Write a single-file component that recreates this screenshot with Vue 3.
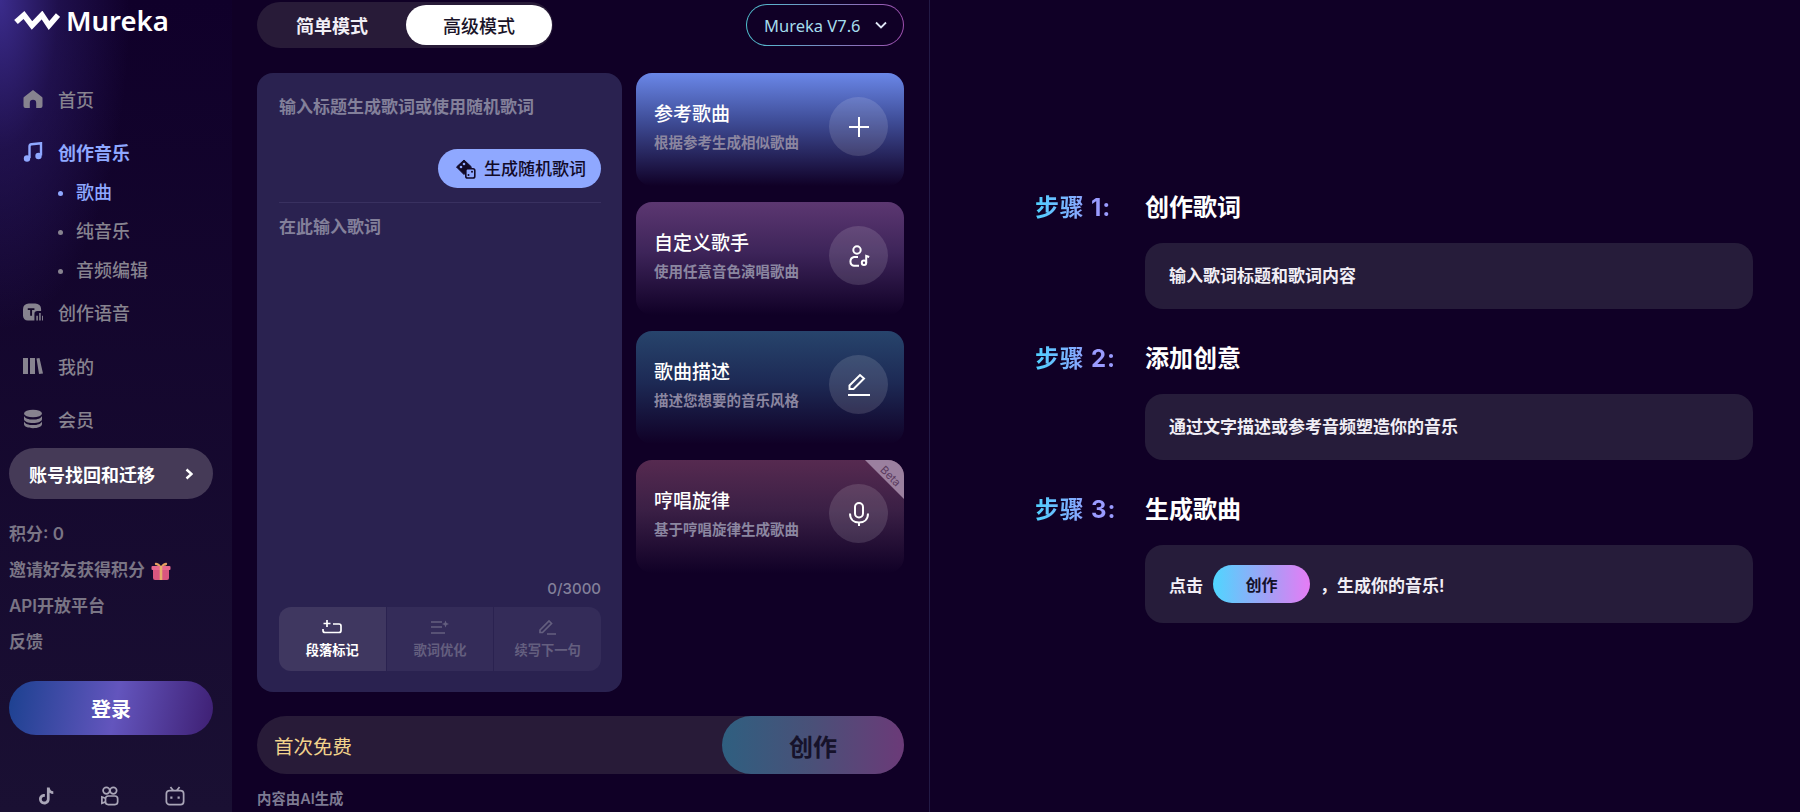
<script setup>
const tabs = [
  { label: '段落标记', active: true, icon: 'mark' },
  { label: '歌词优化', active: false, icon: 'polish' },
  { label: '续写下一句', active: false, icon: 'pen' },
]
const cards = [
  { cls: 'c1', title: '参考歌曲', sub: '根据参考生成相似歌曲', icon: 'plus' },
  { cls: 'c2', title: '自定义歌手', sub: '使用任意音色演唱歌曲', icon: 'singer' },
  { cls: 'c3', title: '歌曲描述', sub: '描述您想要的音乐风格', icon: 'edit' },
  { cls: 'c4', title: '哼唱旋律', sub: '基于哼唱旋律生成歌曲', icon: 'mic', beta: true },
]
</script>

<template>
  <div class="page">
    <aside class="side">
      <div class="logo">
        <svg width="46" height="20" viewBox="0 0 46 20"><path d="M2 11 L10 4 L18 14.500 L28 4 L35 14.500 L44 4" fill="none" stroke="#fff" stroke-width="5.500"/></svg>
        <span>Mureka</span>
      </div>
      <nav class="nav">
        <a class="item first">
          <svg viewBox="0 0 20 20"><path d="M10 1 L19 8 a1.500 1.500 0 0 1 .5 1.200V17a2 2 0 0 1-2 2h-4.300v-5a3.200 3.200 0 0 0-6.400 0V19H2.500a2 2 0 0 1-2-2V9.200A1.500 1.500 0 0 1 1 8Z" fill="currentColor"/></svg>
          首页
        </a>
        <a class="item active music">
          <svg viewBox="0 0 20 20"><path d="M6.500 16V4.500Q6.500 2.500 8.500 2.300L18 1.200v12.300" fill="none" stroke="currentColor" stroke-width="2.400"/><circle cx="4" cy="16.500" r="3.200" fill="currentColor"/><circle cx="15.500" cy="14" r="3.200" fill="currentColor"/></svg>
          创作音乐
        </a>
        <a class="sub on">歌曲</a>
        <a class="sub">纯音乐</a>
        <a class="sub">音频编辑</a>
        <a class="item voice">
          <svg viewBox="0 0 21 20"><path d="M6 1h7a6 6 0 0 1 6 6v2h-4a3 3 0 0 0-3 3v7H5a5 5 0 0 1-5-5V7a6 6 0 0 1 6-6Z" fill="currentColor"/><path d="M5 6h7v2H9.500v6h-2V8H5Z" fill="#140828"/><path d="M14 14h1.600v5H14ZM17 11h1.600v8H17ZM20 14h1v5h-1Z" fill="currentColor"/></svg>
          创作语音
        </a>
        <a class="item mine">
          <svg viewBox="0 0 20 20"><path d="M0 2h5v16H0ZM7 2h5v16H7ZM13.500 2.500l3-.5 3.500 15.500-4 .5Z" fill="currentColor"/></svg>
          我的
        </a>
        <a class="item vip">
          <svg viewBox="0 0 20 20"><ellipse cx="10" cy="4.500" rx="9" ry="3.800" fill="currentColor"/><path d="M1 7c1 2.500 4.500 3.600 9 3.600S18 9.500 19 7v3c0 2.500-4 4-9 4s-9-1.500-9-4Z" fill="currentColor"/><path d="M1 12.500c1 2.500 4.500 3.600 9 3.600s8-1.100 9-3.600V15c0 2.500-4 4.200-9 4.200S1 17.500 1 15Z" fill="currentColor"/></svg>
          会员
        </a>
      </nav>
      <div class="migrate"><span>账号找回和迁移</span><svg width="8" height="12" viewBox="0 0 8 12"><path d="M1.500 1.500 L6.500 6 L1.500 10.500" fill="none" stroke="#fff" stroke-width="2.500"/></svg></div>
      <div class="links">
        <div>积分: 0</div>
        <div class="gift">邀请好友获得积分
          <svg width="20" height="20" viewBox="0 0 20 20"><path d="M2 8h16v9a2 2 0 0 1-2 2H4a2 2 0 0 1-2-2Z" fill="#d9577f"/><rect x="0.500" y="5" width="19" height="4" rx="1" fill="#e8688e"/><rect x="8.700" y="5" width="2.600" height="14" fill="#e5b06a"/><path d="M10 5C7 1 3 1 4 3.500 4.600 5 8 5 10 5ZM10 5c3-4 7-4 6-1.500C15.400 5 12 5 10 5Z" fill="#e5a060"/></svg>
        </div>
        <div>API开放平台</div>
        <div>反馈</div>
      </div>
      <div class="login">登录</div>
      <div class="social">
        <svg width="17" height="20" viewBox="0 0 20 22"><path d="M10.500 1h3.200c.3 2.600 1.800 4.200 4.300 4.500v3.200c-1.600 0-3-.5-4.300-1.400v7.200c0 3.700-2.700 6.500-6.300 6.500S1.200 17.700 1.200 14.600c0-3.700 3.200-6.500 6.900-5.900v3.400c-2-.5-3.700.9-3.700 2.600 0 1.600 1.300 2.900 3 2.900 1.800 0 3.100-1.300 3.100-3.400Z" fill="#aaa6b8"/></svg>
        <svg width="18" height="20" viewBox="0 0 20 22" fill="none" stroke="#aaa6b8" stroke-width="1.900"><circle cx="6" cy="5" r="3.700"/><circle cx="13.700" cy="5" r="3.700"/><rect x="5" y="11" width="13.500" height="9.500" rx="3"/><path d="M5 13.500 1 12v7l4-1.500"/></svg>
        <svg width="20" height="20" viewBox="0 0 22 22" fill="none" stroke="#aaa6b8" stroke-width="1.900"><rect x="1.500" y="5" width="19" height="15.500" rx="3.500"/><path d="M6 1l3 4M16 1l-3 4"/><path d="M7 11.500v2.500M15 11.500v2.500" stroke-width="2.400"/></svg>
      </div>
    </aside>

    <main class="mid">
      <div class="top">
        <div class="seg">
          <span class="seg-btn easy">简单模式</span>
          <span class="seg-btn on">高级模式</span>
        </div>
        <div class="model">
          <span>Mureka V7.6</span>
          <svg width="14" height="9" viewBox="0 0 14 9"><path d="M2 1.500 L7 6.500 L12 1.500" fill="none" stroke="#dfe6f5" stroke-width="1.800"/></svg>
        </div>
      </div>
      <div class="work">
        <section class="lyric">
          <div class="ph title-ph">输入标题生成歌词或使用随机歌词</div>
          <div class="rand-row">
            <div class="rand">
              <svg width="20" height="20" viewBox="0 0 20 20"><path d="M8 1 L15.500 8 L8 15.500 L.5 8Z" fill="#120a28" stroke="#120a28" stroke-linejoin="round"/><circle cx="8" cy="5" r="1.300" fill="#8fa8ff"/><circle cx="5" cy="8" r="1.300" fill="#8fa8ff"/><rect x="9.800" y="9.800" width="9" height="9.200" rx="1.800" fill="#8fa8ff" stroke="#120a28" stroke-width="1.600"/><circle cx="12.500" cy="16" r="1" fill="#120a28"/><circle cx="16" cy="12.800" r="1" fill="#120a28"/></svg>
              <span>生成随机歌词</span>
            </div>
          </div>
          <div class="rule"></div>
          <div class="ph body-ph">在此输入歌词</div>
          <div class="count">0/3000</div>
          <div class="tools">
            <div v-for="t in tabs" :key="t.label" class="tool" :class="{ on: t.active }">
              <svg width="20" height="16" viewBox="0 0 20 16" fill="none" stroke="currentColor" stroke-width="1.700">
                <template v-if="t.icon === 'mark'">
                  <path d="M5 1v7M1.500 4.500h7M11 5h6a2 2 0 0 1 2 2v4.500a2 2 0 0 1-2 2H3a2 2 0 0 1-2-2V10"/>
                </template>
                <template v-else-if="t.icon === 'polish'">
                  <path d="M1 3h11M1 8h11M1 14h14"/>
                  <path d="M15.500 1.500l1 2.500 2.500 1-2.500 1-1 2.500-1-2.500L12 5l2.500-1Z" fill="currentColor" stroke="none"/>
                </template>
                <template v-else>
                  <path d="M2 11 11 2l2.500 2.500-9 9H2ZM9 15h9"/>
                </template>
              </svg>
              <span>{{ t.label }}</span>
            </div>
          </div>
        </section>
        <section class="cards">
          <div v-for="c in cards" :key="c.title" class="card" :class="c.cls">
            <div class="card-text">
              <div class="card-title">{{ c.title }}</div>
              <div class="card-sub">{{ c.sub }}</div>
            </div>
            <div class="circle">
              <svg width="26" height="26" viewBox="0 0 26 26" fill="none" stroke="#fff" stroke-width="2">
                <path v-if="c.icon === 'plus'" d="M13 3v20M3 13h20"/>
                <template v-else-if="c.icon === 'singer'">
                  <circle cx="11" cy="7" r="3.700"/>
                  <path d="M12 14H8a4.500 4.500 0 0 0 0 8.800h5"/>
                  <circle cx="18" cy="19.800" r="2.200"/>
                  <path d="M20.200 19.800V13l3 1"/>
                </template>
                <template v-else-if="c.icon === 'edit'">
                  <path d="M3.500 17v-3.500L14 3l4 3.500L7.500 17Z"/>
                  <path d="M2 23h22" stroke-width="2.200"/>
                </template>
                <template v-else>
                  <rect x="9" y="2" width="8" height="14.500" rx="4"/>
                  <path d="M4 12.500c0 6 4 9 9 9s9-3 9-9M13 21.500V25"/>
                </template>
              </svg>
            </div>
            <div v-if="c.beta" class="beta"><span>Beta</span></div>
          </div>
        </section>
      </div>
      <div class="create-bar">
        <span class="free">首次免费</span>
        <div class="create">创作</div>
      </div>
      <div class="ai">内容由AI生成</div>
    </main>

    <section class="guide">
      <div class="step">
        <div class="step-head"><span class="step-no">步骤 1:</span><span class="step-title">创作歌词</span></div>
        <div class="step-box">输入歌词标题和歌词内容</div>
      </div>
      <div class="step">
        <div class="step-head"><span class="step-no">步骤 2:</span><span class="step-title">添加创意</span></div>
        <div class="step-box">通过文字描述或参考音频塑造你的音乐</div>
      </div>
      <div class="step">
        <div class="step-head"><span class="step-no">步骤 3:</span><span class="step-title">生成歌曲</span></div>
        <div class="step-box tall">点击<span class="pill">创作</span><span class="comma">，</span>生成你的音乐!</div>
      </div>
    </section>
  </div>
</template>

<style>
html, body { margin: 0; background: #100026; }
</style>

<style scoped>
.page {
  display: flex;
  width: 1800px;
  height: 812px;
  overflow: hidden;
  background: #100026;
  color: #fff;
  font-family: Inter, "Noto Sans CJK SC", sans-serif;
}

/* sidebar */
.side {
  width: 232px;
  height: 812px;
  flex: none;
  display: flex;
  flex-direction: column;
  padding-left: 9px;
  box-sizing: border-box;
  background:
    radial-gradient(ellipse 130px 330px at 0 0, #3b2c8c 0%, rgba(59, 44, 140, 0.35) 45%, rgba(59, 44, 140, 0) 100%),
    linear-gradient(180deg, #10002a 0%, #1a1033 100%);
}
.logo {
  display: flex;
  align-items: center;
  gap: 6px;
  height: 42px;
  margin-left: 5px;
  font-family: "Noto Sans", sans-serif;
  font-size: 27.500px;
  font-weight: 600;
  line-height: 42px;
}
.nav { display: flex; flex-direction: column; margin-left: 14px; }
.item {
  display: flex;
  align-items: center;
  gap: 15px;
  height: 28px;
  font-size: 18px;
  color: #87838f;
  font-weight: 500;
}
.item svg { width: 20px; height: 20px; flex: none; }
.first { margin-top: 43px; }
.music { margin-top: 25px; }
.voice { margin-top: 13px; }
.mine { margin-top: 26px; }
.vip { margin-top: 25px; }
.active { color: #8fa8ff; font-weight: 700; }
.sub {
  position: relative;
  margin-left: 53px;
  height: 28px;
  line-height: 28px;
  margin-top: 11px;
  font-size: 18px;
  font-weight: 500;
  color: #87838f;
}
.sub::before {
  content: "";
  position: absolute;
  left: -18px;
  top: 12px;
  width: 5px;
  height: 5px;
  border-radius: 50%;
  background: currentColor;
}
.music + .sub { margin-top: 13px; }
.on.sub { color: #8fa8ff; }
.migrate {
  width: 204px;
  height: 51px;
  margin-top: 15px;
  box-sizing: border-box;
  padding: 0 20px 0 20px;
  border-radius: 26px;
  background: #453a57;
  display: flex;
  align-items: center;
  justify-content: space-between;
  font-size: 18px;
  font-weight: 600;
}
.links {
  margin-top: 22px;
  display: flex;
  flex-direction: column;
  gap: 9px;
  font-size: 17px;
  font-weight: 600;
  line-height: 27px;
  color: #7a7585;
}
.gift { display: flex; align-items: center; gap: 6px; height: 27px; }
.login {
  width: 204px;
  height: 54px;
  margin-top: 25px;
  border-radius: 27px;
  display: flex;
  align-items: center;
  justify-content: center;
  font-size: 20px;
  font-weight: 700;
  background: linear-gradient(100deg, #1c4190 0%, #6355bd 52%, #3e1f73 100%);
}
.social {
  margin-top: 51px;
  display: flex;
  justify-content: space-between;
  align-items: center;
  width: 147px;
  margin-left: 29px;
}

/* middle */
.mid {
  width: 698px;
  flex: none;
  box-sizing: border-box;
  padding: 2px 25px 0;
  border-right: 1px solid #231a45;
}
.top { display: flex; justify-content: space-between; align-items: flex-start; height: 71px; }
.seg {
  width: 296px;
  height: 46px;
  border-radius: 23px;
  background: #281b38;
  box-sizing: border-box;
  padding: 3px 1px 3px 0;
  display: flex;
  justify-content: space-between;
}
.seg-btn {
  width: 146px;
  display: flex;
  align-items: center;
  justify-content: center;
  border-radius: 20px;
  font-size: 18px;
  font-weight: 600;
  color: #f1eef5;
}
.seg-btn.easy { padding-left: 4px; box-sizing: border-box; }
.seg-btn.on { background: #fff; color: #1a1428; font-weight: 500; }
.model {
  width: 158px;
  height: 42px;
  margin-top: 2px;
  box-sizing: border-box;
  border: 1.500px solid transparent;
  border-radius: 21px;
  background:
    linear-gradient(#100026, #100026) padding-box,
    linear-gradient(90deg, #4fc3d0, #a04fb0) border-box;
  display: flex;
  align-items: center;
  gap: 13px;
  padding-left: 17px;
  font-family: "Noto Sans", sans-serif;
  font-size: 16.500px;
  color: #a5dcec;
}
.work { display: flex; gap: 14px; align-items: flex-start; }
.lyric {
  width: 365px;
  height: 619px;
  box-sizing: border-box;
  padding: 22px 21px 21px 22px;
  border-radius: 16px;
  background: #2a2250;
  display: flex;
  flex-direction: column;
}
.ph { font-size: 17px; line-height: 24px; color: #83809a; font-weight: 600; }
.rand-row { display: flex; justify-content: flex-end; margin-top: 30px; }
.rand {
  width: 163px;
  height: 39px;
  box-sizing: border-box;
  border-radius: 20px;
  background: #8fa8ff;
  color: #120a28;
  display: flex;
  align-items: center;
  gap: 8px;
  padding-left: 18px;
  font-size: 17px;
  font-weight: 500;
}
.rand span { position: relative; top: -1px; }
.rule { height: 1px; background: #393160; margin-top: 14px; }
.body-ph { margin-top: 12px; flex: 1; }
.count { text-align: right; font-size: 15px; line-height: 20px; color: #83809a; font-weight: 500; margin-bottom: 8px; }
.tools {
  display: flex;
  gap: 1px;
  height: 64px;
  border-radius: 12px;
  overflow: hidden;
}
.tool {
  flex: 1;
  background: #342c59;
  color: #645f7f;
  display: flex;
  flex-direction: column;
  align-items: center;
  padding-top: 12px;
  box-sizing: border-box;
  font-size: 13.300px;
  font-weight: 700;
  gap: 6px;
}
.tool.on { background: #3f3760; color: #fff; }
.tool span { line-height: 18px; }
.cards { width: 268px; display: flex; flex-direction: column; gap: 16px; }
.card {
  position: relative;
  height: 113px;
  box-sizing: border-box;
  border-radius: 16px;
  padding: 24px 16px 0 18px;
  display: flex;
  justify-content: space-between;
  align-items: flex-start;
  overflow: hidden;
}
.c1 { background: linear-gradient(180deg, #6a87e8 0%, #41509c 40%, #100026 100%); }
.c2 { background: linear-gradient(180deg, #5c3771 0%, #3d2459 45%, #100026 100%); }
.c3 { background: linear-gradient(180deg, #27446c 0%, #1d2a55 45%, #100026 100%); }
.c4 { background: linear-gradient(180deg, #562a50 0%, #3a1f45 45%, #100026 100%); }
.card-text { padding-top: 5px; }
.card-title { font-size: 19px; line-height: 26px; font-weight: 500; }
.card-sub { font-size: 14.500px; line-height: 20px; margin-top: 5px; font-weight: 600; color: #8b86a0; white-space: nowrap; }
.circle {
  width: 59px;
  height: 59px;
  flex: none;
  border-radius: 50%;
  background: rgba(255, 255, 255, 0.13);
  display: flex;
  align-items: center;
  justify-content: center;
}
.beta {
  position: absolute;
  top: 0;
  right: 0;
  width: 39px;
  height: 39px;
  background: #9b809f;
  clip-path: polygon(0 0, 100% 100%, 100% 0);
}
.beta span {
  position: absolute;
  left: 14px;
  top: 9px;
  font-size: 11px;
  line-height: 14px;
  color: #5a3a5e;
  transform: rotate(45deg);
}
.create-bar {
  margin-top: 24px;
  height: 58px;
  border-radius: 29px;
  background: #281b38;
  display: flex;
  align-items: center;
  justify-content: space-between;
  padding-left: 17px;
}
.free { font-size: 19.500px; color: #f1d28c; font-weight: 400; }
.create {
  width: 182px;
  height: 58px;
  border-radius: 29px;
  display: flex;
  align-items: center;
  justify-content: center;
  font-size: 24px;
  font-weight: 700;
  color: #16122a;
  background: linear-gradient(90deg, #2f5f80 0%, #4a5078 50%, #6b3a78 100%);
}
.ai { margin-top: 15px; font-size: 14.400px; font-weight: 600; color: #7d7a92; line-height: 20px; }

/* guide */
.guide {
  flex: 1;
  box-sizing: border-box;
  padding: 189px 47px 0 105px;
  display: flex;
  flex-direction: column;
  gap: 31px;
}
.step-head { display: flex; align-items: center; height: 34px; }
.step-no {
  width: 84px;
  margin-right: 26px;
  margin-top: -1px;
  font-size: 24px;
  font-weight: 700;
  letter-spacing: 0.8px;
  background: linear-gradient(90deg, #4fd1ff, #9a9bff 70%);
  -webkit-background-clip: text;
  background-clip: text;
  color: transparent;
  white-space: nowrap;
}
.step-title { font-size: 24px; font-weight: 700; margin-top: -2px; }
.step-box {
  margin: 20px 0 0 110px;
  height: 66px;
  box-sizing: border-box;
  padding: 0 24px 3px;
  border-radius: 18px;
  background: #261c3a;
  display: flex;
  align-items: center;
  font-size: 17px;
  font-weight: 600;
  color: #f1eef5;
}
.step-box.tall { height: 78px; padding-bottom: 0; }
.pill {
  width: 97px;
  height: 38px;
  margin-left: 10px;
  border-radius: 19px;
  display: flex;
  align-items: center;
  justify-content: center;
  color: #15112a;
  font-size: 16px;
  background: linear-gradient(90deg, #4fd6ff 0%, #a89cf5 60%, #e67cf5 100%);
}
.comma { margin: 0 0 0 10px; }
</style>
